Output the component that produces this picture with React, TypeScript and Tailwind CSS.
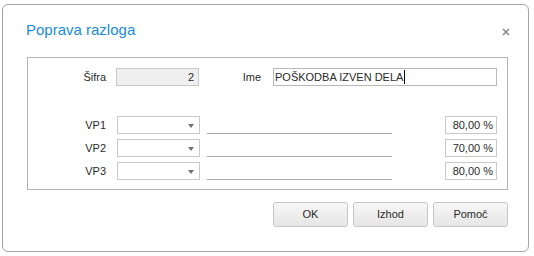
import React from 'react';

const rows = [
  { label: 'VP1', pct: '80,00 %' },
  { label: 'VP2', pct: '70,00 %' },
  { label: 'VP3', pct: '80,00 %' },
];

function Combo() {
  return (
    <div className="relative h-[18px] w-[83px] border border-[#c9c9c9] bg-white">
      <span className="absolute right-[5px] top-[7px] h-0 w-0 border-x-[3px] border-t-[4px] border-x-transparent border-t-[#707070]" />
    </div>
  );
}

export default function App() {
  return (
    <div className="h-[256px] w-[534px] bg-white pl-[2px] pt-[4px] font-['Liberation_Sans',Arial,sans-serif] text-[11px] text-[#2a2a2a]">
      <div className="flex h-[248px] w-[527px] flex-col rounded-[6px] border border-[#a3a3a3] bg-white">
        {/* header */}
        <div className="flex h-[52px] items-center justify-between pl-[23px] pr-[18px] pb-[1px]">
          <span className="text-[15px] text-[#1a8bd4]">Poprava razloga</span>
          <svg width="8" height="8" viewBox="0 0 8 8" className="mt-[2px]">
            <path d="M1 1 L7 7 M7 1 L1 7" stroke="#8a8a8a" strokeWidth="1.6" />
          </svg>
        </div>

        {/* form panel */}
        <div className="ml-[24px] h-[133px] w-[481px] border border-[#b3b3b3] pt-[10px]">
          <div className="flex h-[18px] items-center">
            <span className="w-[78px] text-right">Šifra</span>
            <div className="ml-[10px] flex h-[18px] w-[83px] items-center justify-end border border-[#c9c9c9] bg-[#efefef] pr-[4px]">2</div>
            <span className="w-[62px] text-right">Ime</span>
            <div className="ml-[12px] flex h-[18px] w-[224px] items-center border border-[#b9b9b9] bg-white pl-[1px]">
              POŠKODBA IZVEN DELA
              <span className="ml-[1px] h-[14px] w-[1px] bg-black" />
            </div>
          </div>

          <div className="mt-[30px] flex flex-col gap-[5px]">
            {rows.map((r) => (
              <div key={r.label} className="flex h-[18px] items-center">
                <span className="w-[78px] text-right">{r.label}</span>
                <div className="ml-[11px]">
                  <Combo />
                </div>
                <div className="ml-[7px] h-[18px] w-[185px] border-b border-[#a8a8a8]" />
                <div className="ml-[53px] flex h-[18px] w-[52px] items-center justify-end border border-[#c9c9c9] bg-white pr-[3px]">
                  {r.pct}
                </div>
              </div>
            ))}
          </div>
        </div>

        {/* buttons */}
        <div className="mt-[12px] flex w-[505px] justify-end gap-[5px]">
          {['OK', 'Izhod', 'Pomoč'].map((b) => (
            <button
              key={b}
              className="h-[25px] w-[75px] rounded-[3px] border border-[#c6c6c6] bg-gradient-to-b from-[#f7f7f7] to-[#e6e6e6] font-['Liberation_Sans',Arial,sans-serif] text-[11px] font-normal text-[#2a2a2a]"
            >
              {b}
            </button>
          ))}
        </div>
      </div>
    </div>
  );
}
